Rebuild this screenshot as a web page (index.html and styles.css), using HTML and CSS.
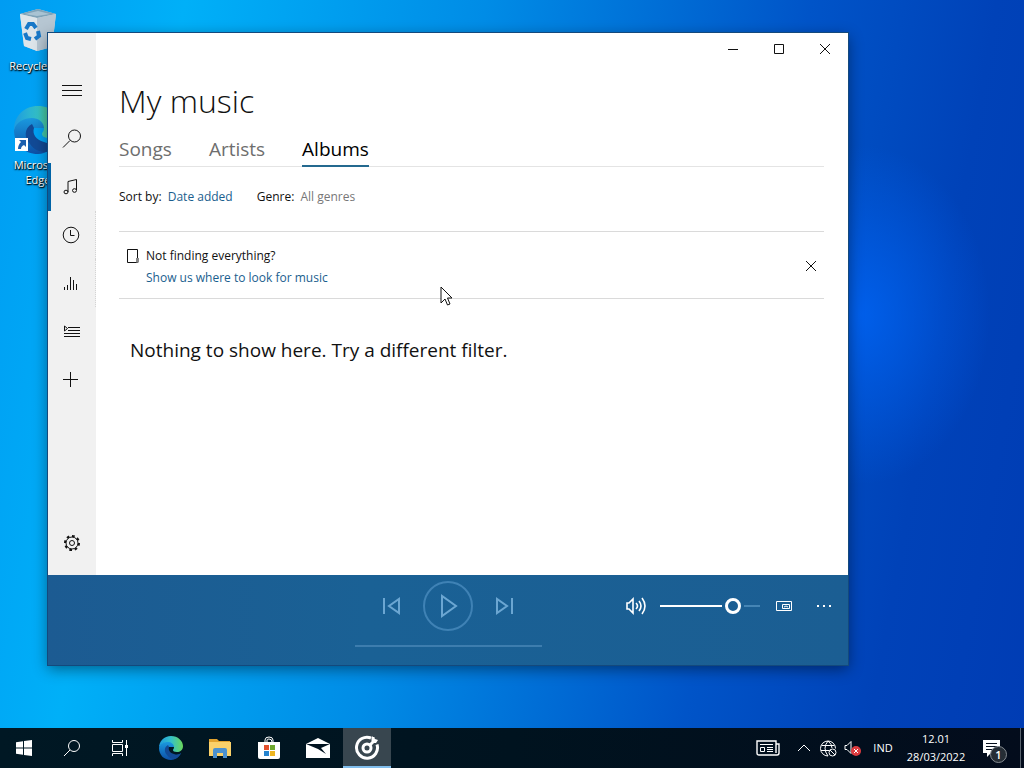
FILE: index.html
```html
<!DOCTYPE html>
<html lang="en">
<head>
  <meta charset="UTF-8" />
  <title>My music</title>
  <link rel="stylesheet" href="styles.css">
</head>
<body>

<svg class="defs" aria-hidden="true">
  <defs>
    <linearGradient id="edge-low" x1="0" y1="0" x2="0" y2="1">
      <stop offset="0" stop-color="#1b9de2"/>
      <stop offset="1" stop-color="#0d4fa6"/>
    </linearGradient>
    <linearGradient id="edge-top" x1="0" y1="0" x2="1" y2="0">
      <stop offset="0" stop-color="#1d9be0"/>
      <stop offset="0.5" stop-color="#34c1c8"/>
      <stop offset="1" stop-color="#6bd85a"/>
    </linearGradient>
    <symbol id="edge" viewBox="0 0 24 24">
      <path fill="url(#edge-low)" d="M0 12C1 7 5 5 10 5c5 0 8 3 8 6H9c-1 4 2 8 7 8 3 0 5-1 6-2-2 4-6 7-10 7C5 24 0 19 0 12z"/>
      <path fill="#124a96" d="M9 9c-4 2-4 7-1 10 2 3 5 4 8 4 3-1 5-4 6-6-2 2-5 2-7 1-4-1-6-4-5-7z"/>
      <path fill="url(#edge-top)" d="M0 12C0 5 5 0 12 0c7 0 12 5 12 10 0 4-3 6-6 6s-4-1-4-2 1-1 1-3c0-3-3-5-6-5-4 0-8 2-9 6z"/>
    </symbol>
  </defs>
</svg>

<main class="desktop">
  <div class="shortcuts">
    <a class="shortcut" href="#">
      <svg width="42" height="44" viewBox="0 0 42 44">
        <path fill="#c9d6df" d="M3 6l18-5 18 5-4 33-15 4-13-5z"/>
        <path fill="#7fa3b8" d="M3 6l18-5 18 5-19 4z"/>
        <path fill="#a9c3d3" d="M8 6l13-3 12 3-13 2z"/>
        <path fill="#dde5ea" d="M3 6l17 4v33L7 38z"/>
        <path fill="#b6c6d2" d="M20 10l19-4-4 33-15 4z"/>
        <g fill="none" stroke="#1878c8" stroke-width="4">
          <path d="M9 21l3-5h4l3 4M21 23l1 5-4 3M14 31l-4-1-2-5"/>
        </g>
      </svg>
      <span>Recycle Bin</span>
    </a>
    <a class="shortcut" href="#">
      <span class="edge-icon">
        <svg width="48" height="48"><use href="#edge"/></svg>
        <svg class="arrow" width="13" height="13" viewBox="0 0 13 13">
          <path fill="#fff" d="M0 0h13v13H0z"/>
          <path fill="#1c5fae" d="M4 2h7v7L9 7c-2 1-3 2-3 4H3c0-3 1-5 3-7z"/>
        </svg>
      </span>
      <span>Microsoft Edge</span>
    </a>
  </div>

  <section class="window">
    <nav class="sidebar">
      <button aria-label="Menu"><svg viewBox="0 0 20 20"><path d="M0 4.500h20M0 9.500h20M0 14.500h20"/></svg></button>
      <button aria-label="Search"><svg viewBox="0 0 20 20"><circle cx="12.500" cy="7" r="6"/><path d="M8 11.500L1 18.500"/></svg></button>
      <button class="selected" aria-label="My music"><svg viewBox="0 0 20 20"><path d="M6 15V4.500L14.500 2.500V13"/><ellipse cx="4" cy="15" rx="2" ry="1.800"/><ellipse cx="12.500" cy="13.500" rx="2" ry="1.800"/></svg></button>
      <button class="clipped" aria-label="Recent plays"><svg viewBox="0 0 20 20"><circle cx="9" cy="10" r="7.800"/><path d="M8.500 5v5.500h4"/></svg></button>
      <button class="clipped" aria-label="Now playing"><svg viewBox="0 0 20 20"><path d="M2.500 14v3M5.500 12v5M8.500 4v13M11.500 7v10M14.500 11v6"/></svg></button>
      <button aria-label="Playlists"><svg viewBox="0 0 20 20"><path d="M6 6.500h12M6 9.500h12M2 12.500h16M2 15.500h16M2.500 5v5l3-2.500z"/></svg></button>
      <button aria-label="New playlist"><svg viewBox="0 0 20 20"><path d="M8.500 3v15M1 10.500h15"/></svg></button>
      <button class="settings" aria-label="Settings">
        <svg viewBox="0 0 20 20">
          <circle cx="10" cy="10" r="6"/>
          <circle class="teeth" cx="10" cy="10" r="7" pathLength="32"/>
          <circle cx="10" cy="10" r="2.500"/>
        </svg>
      </button>
    </nav>

    <div class="page">
      <div class="titlebar">
        <button aria-label="Minimize"><svg viewBox="0 0 10 10"><path d="M0 5.500h10"/></svg></button>
        <button aria-label="Maximize"><svg viewBox="0 0 10 10"><path d="M.5.5h9v9h-9z"/></svg></button>
        <button aria-label="Close"><svg viewBox="0 0 10 10"><path d="M0 0l10 10M10 0L0 10"/></svg></button>
      </div>

      <div class="content">
        <h1>My music</h1>

        <div class="tabs">
          <button class="tab">Songs</button>
          <button class="tab">Artists</button>
          <button class="tab active">Albums</button>
        </div>

        <div class="filters">
          <div>Sort by: <a href="#">Date added</a></div>
          <div>Genre: <a class="muted" href="#">All genres</a></div>
        </div>

        <div class="notice">
          <svg width="14" height="16" viewBox="0 0 14 16"><path d="M1.500 1.500h10v13h-10z"/><path class="tag" d="M11.500 10v4.500"/></svg>
          <div class="notice-text">
            <p>Not finding everything?</p>
            <a href="#">Show us where to look for music</a>
          </div>
          <button aria-label="Dismiss"><svg viewBox="0 0 10 10"><path d="M0 0l10 10M10 0L0 10"/></svg></button>
        </div>

        <p class="empty">Nothing to show here. Try a different filter.</p>
      </div>
    </div>

    <footer class="player">
      <div class="transport">
        <button aria-label="Previous"><svg width="20" height="20" viewBox="0 0 20 20"><path d="M2 2v16M17 3v14L7 10z"/></svg></button>
        <button class="play" aria-label="Play"><svg width="24" height="24" viewBox="0 0 24 24"><path d="M6 2v20l14-10z"/></svg></button>
        <button aria-label="Next"><svg width="20" height="20" viewBox="0 0 20 20"><path d="M18 2v16M3 3v14l10-7z"/></svg></button>
      </div>
      <div class="extras">
        <button class="speaker" aria-label="Mute"><svg width="22" height="20" viewBox="0 0 22 20"><path stroke-width="1.600" d="M2 7h2l4-4v14l-4-4H2zM11 7q3 3 0 6M14 5q4 5 0 10M17 2q6 8 0 16"/></svg></button>
        <input class="volume" type="range" min="0" max="100" value="77" aria-label="Volume">
        <button aria-label="Mini view"><svg width="16" height="12" viewBox="0 0 16 12"><path d="M.5 1.500h15v9H.5zM6.500 4.500h7v4h-7zM8 7l2-1 2 1"/></svg></button>
        <button aria-label="More"><svg width="16" height="4" viewBox="0 0 16 4"><path class="dots" d="M1 1h2v2H1zM7 1h2v2H7zM13 1h2v2h-2z"/></svg></button>
      </div>
      <input class="progress" type="range" value="0" disabled aria-label="Progress">
    </footer>
  </section>

  <svg class="cursor" width="13" height="20" viewBox="0 0 13 20"><path d="M1 1v16l4-4 2.500 6 2.500-1-2.500-6H12z"/></svg>
</main>

<footer class="taskbar">
  <div class="system">
    <button aria-label="Start"><svg width="16" height="16" viewBox="0 0 16 16"><path class="solid" d="M0 2.300l7-1V7.500H0zM8 1.100L16 0v7.500H8zM0 8.500h7v6.200l-7-1zM8 8.500h8V16l-8-1.100z"/></svg></button>
    <button aria-label="Search"><svg width="18" height="18" viewBox="0 0 18 18"><circle cx="11" cy="7" r="5.500"/><path d="M7 11L1 17"/></svg></button>
    <button aria-label="Task view"><svg width="16" height="16" viewBox="0 0 16 16"><path d="M.5 0v2.500h10V0M.5 4.500h10v7H.5zM.5 16v-2.500h10V16M14.500 0v16"/><path class="solid" d="M13 5h3v3h-3z"/></svg></button>
  </div>
  <div class="apps">
    <button aria-label="Edge"><svg class="color" width="24" height="24"><use href="#edge"/></svg></button>
    <button aria-label="File Explorer">
      <svg class="color" width="22" height="20" viewBox="0 0 22 20">
        <path fill="#e2a32e" d="M0 1h8l2 2h11v5H0z"/>
        <path fill="#fad16a" d="M0 4h22v14H0z"/>
        <path fill="#4b91cf" d="M4 12q0-2 2-2h10q2 0 2 2v8h-4v-5H8v5H4z"/>
      </svg>
    </button>
    <button aria-label="Store">
      <svg width="24" height="24" viewBox="0 0 24 24">
        <path d="M8 6V4q0-3 4-3t4 3v2M10 6V4q0-1 2-1 3 0 3 3"/>
        <path class="solid" d="M1 6h22v15q0 2-2 2H3q-2 0-2-2z"/>
        <g stroke="none">
          <path fill="#e2502d" d="M7 9h5v5H7z"/><path fill="#6fa82e" d="M13 9h5v5h-5z"/>
          <path fill="#2584cf" d="M7 15h5v5H7z"/><path fill="#eeb621" d="M13 15h5v5h-5z"/>
        </g>
      </svg>
    </button>
    <button aria-label="Mail">
      <svg width="24" height="20" viewBox="0 0 24 20">
        <path class="solid" d="M0 6l12-6 12 6v14H0z"/>
        <path stroke="none" fill="#00121f" d="M0 6h24l-9 4 5 6-8-5z"/>
      </svg>
    </button>
    <button class="running" aria-label="Groove Music">
      <svg width="26" height="26" viewBox="0 0 26 26">
        <path class="ring" d="M17 3A10.500 10.500 0 1 0 23 9.500"/>
        <circle class="ring" cx="13" cy="13" r="4"/>
        <path class="ring" d="M16 10l3-3V2"/>
        <path class="solid" d="M18 1l3 3 3 1-2 3h-4z"/>
      </svg>
    </button>
  </div>
  <div class="tray">
    <button class="news" aria-label="News"><svg width="24" height="16" viewBox="0 0 24 16"><path stroke-width="1.400" d="M20 4h3v9q0 2-2 2H3q-2 0-2-2V1h19v12"/><path d="M4 4.500h13M11 7.500h6M11 9.500h6M11 11.500h6M4.500 7.500h4v4h-4z"/></svg></button>
    <button class="chevron" aria-label="Show hidden icons"><svg width="12" height="8" viewBox="0 0 12 8"><path d="M0 7l6-6 6 6"/></svg></button>
    <button class="small" aria-label="Network"><svg width="17" height="17" viewBox="0 0 17 17"><path d="M8 16a7.500 7.500 0 1 1 7.500-7.500M8 16Q2 8 8 1q4 3 4 7M1.500 5.500h13M1 10.500h8"/><circle cx="12.500" cy="12.500" r="3.500"/><path d="M10 10l5 5"/></svg></button>
    <button class="small" aria-label="Volume"><svg width="17" height="16" viewBox="0 0 17 16"><path d="M1 5.500h2l4-4v12l-4-4H1z"/><circle fill="#dc3b3f" stroke="none" cx="12" cy="11" r="5"/><path d="M10 9l4 4M14 9l-4 4"/></svg></button>
    <button class="lang">IND</button>
    <button class="clock"><span>12.01</span><span>28/03/2022</span></button>
    <button class="alerts" aria-label="Notifications"><svg width="17" height="17" viewBox="0 0 17 17"><path class="solid" d="M0 0h17v13H8l-4 4v-4H0z"/><path class="lines" d="M3 3.500h11M3 6.500h11M3 9.500h7"/></svg><span class="badge">1</span></button>
  </div>
</footer>

</body>
</html>
```

FILE: styles.css
```css
* {
  box-sizing: border-box;
}
body {
  margin: 0;
  height: 100vh;
  display: flex;
  flex-direction: column;
  overflow: hidden;
  font-family: 'Open Sans', 'Noto Sans', sans-serif;
  font-size: 12px;
  line-height: 16px;
  color: #111;
  background:
    radial-gradient(ellipse 130px 170px at 84% 41%, rgba(0, 100, 245, 0.8), transparent),
    linear-gradient(100deg, #009cf2 0%, #00b0f8 16%, #008ce6 42%, #0054c8 70%, #0042b8 86%, #003cb4 100%);
}
button {
  display: flex;
  align-items: center;
  justify-content: center;
  padding: 0;
  border: 0;
  background: none;
  color: inherit;
  font: inherit;
}
button svg {
  fill: none;
  stroke: currentColor;
}
a {
  color: #1a5e8e;
  text-decoration: none;
}
p {
  margin: 0;
}
.defs {
  position: absolute;
  width: 0;
  height: 0;
}

/* Desktop */
.desktop {
  position: relative;
  flex: 1;
}
.shortcuts {
  display: flex;
  flex-direction: column;
  gap: 33px;
  width: 76px;
  padding-top: 8px;
}
.shortcut {
  display: flex;
  flex-direction: column;
  align-items: center;
  gap: 6px;
  color: #fff;
  font-size: 11px;
  line-height: 15px;
  text-align: center;
  text-shadow: 0 1px 2px #000, 1px 1px 1px #000;
}
.edge-icon {
  position: relative;
  height: 45px;
}
.arrow {
  position: absolute;
  left: 1px;
  bottom: 0;
}

/* Window */
.window {
  position: absolute;
  top: 33px;
  left: 48px;
  right: 176px;
  bottom: 63px;
  display: grid;
  grid-template-columns: 48px 1fr;
  grid-template-rows: 1fr 90px;
  background: #fff;
  box-shadow: 0 0 0 1px #14497c, 0 4px 14px rgba(0, 0, 0, 0.45);
}
.sidebar {
  display: flex;
  flex-direction: column;
  padding: 34px 0 8px;
  background: #f1f1f1;
}
.sidebar button {
  height: 48px;
}
.sidebar svg {
  width: 20px;
  height: 20px;
}
.sidebar .selected {
  border-left: 3px solid #0063a6;
  padding-right: 3px;
}
.sidebar .clipped {
  border-right: 1px dotted #d4d4d4;
  padding-left: 1px;
}
.sidebar .settings {
  margin-top: auto;
}
.teeth {
  stroke-width: 2;
  stroke-dasharray: 2 2;
}
.titlebar {
  display: flex;
  justify-content: flex-end;
}
.titlebar button {
  width: 46px;
  height: 32px;
}
.titlebar svg,
.notice button svg {
  width: 10px;
  height: 10px;
  overflow: visible;
}

/* Library page */
.content {
  padding: 12px 24px 12px 23px;
}
h1 {
  margin: 0;
  font-size: 32px;
  line-height: 48px;
  font-weight: 300;
}
.tabs {
  display: flex;
  gap: 37px;
  margin-top: 8px;
  border-bottom: 1px solid #e4e4e4;
}
.tab {
  height: 34px;
  margin-bottom: -1px;
  border-bottom: 2px solid transparent;
  font-size: 19px;
  color: #6e6e6e;
}
.tab.active {
  color: #000;
  border-color: #24698f;
}
.filters {
  display: flex;
  gap: 24px;
  padding: 22px 0 26px;
}
.filters a {
  margin-left: 3px;
}
.filters .muted {
  color: #777;
}
.notice {
  display: flex;
  gap: 6px;
  padding: 16px 0 12px 7px;
  border-top: 1px solid #dadada;
  border-bottom: 1px solid #dadada;
}
.notice > svg {
  fill: none;
  stroke: #111;
}
.notice .tag {
  stroke: #888;
  stroke-width: 3;
}
.notice-text {
  flex: 1;
}
.notice-text p {
  margin-bottom: 6px;
}
.notice button {
  width: 26px;
  height: 36px;
}
.empty {
  padding: 36px 11px;
  font-size: 19px;
  line-height: 30px;
}

/* Player */
.player {
  grid-column: 1 / -1;
  display: grid;
  grid-template-columns: 1fr auto 1fr;
  grid-template-rows: 62px 18px;
  align-items: center;
  background: linear-gradient(90deg, #1c5b92, #1a6195 40%, #1b5e93);
  color: #fff;
}
.transport {
  grid-column: 2;
  display: flex;
  align-items: center;
  gap: 11px;
  color: #6ba6d2;
}
.transport button {
  width: 40px;
  height: 50px;
}
.transport svg {
  stroke-width: 2;
}
.transport .play {
  width: 50px;
  border: 2px solid #3f82b5;
  border-radius: 50%;
}
.extras {
  display: flex;
  align-items: center;
  justify-content: flex-end;
  padding-right: 4px;
}
.extras button {
  width: 40px;
  height: 40px;
}
.extras .speaker {
  width: 48px;
}
.dots {
  fill: #fff;
  stroke: none;
}
.volume,
.progress {
  appearance: none;
  margin: 0;
  background: none;
}
.volume {
  width: 100px;
  margin-right: 4px;
}
.volume::-webkit-slider-runnable-track {
  height: 2px;
  background: linear-gradient(90deg, #fff 62%, transparent 62%, transparent 84%, #4585b5 84%);
}
.volume::-webkit-slider-thumb {
  appearance: none;
  width: 16px;
  height: 16px;
  margin-top: -7px;
  border: 3px solid #fff;
  border-radius: 50%;
}
.progress {
  grid-column: 1 / -1;
  justify-self: center;
  width: 187px;
}
.progress::-webkit-slider-runnable-track {
  height: 2px;
  background: #3d7dae;
}
.progress::-webkit-slider-thumb {
  appearance: none;
  width: 0;
}
.cursor {
  position: absolute;
  top: 286px;
  left: 440px;
  fill: #fff;
  stroke: #111;
}

/* Taskbar */
.taskbar {
  display: flex;
  height: 40px;
  background: linear-gradient(90deg, #001824, #00131f 50%, #030c1c);
  color: #fff;
}
.taskbar .solid {
  fill: #fff;
  stroke: none;
}
.taskbar .color {
  stroke: none;
}
.system,
.apps,
.tray {
  display: flex;
}
.system button,
.apps button {
  width: 48px;
}
.apps {
  gap: 1px;
  margin-left: 3px;
}
.apps .running {
  padding-top: 2px;
  background: #38464f;
  border-bottom: 2px solid #80bdec;
}
.ring {
  stroke-width: 3;
}
.tray {
  margin-left: auto;
  border-right: 1px solid #59636e;
  margin-right: 3px;
  font-size: 11px;
}
.news {
  width: 48px;
}
.chevron,
.small {
  width: 24px;
}
.lang {
  width: 38px;
}
.tray .clock {
  flex-direction: column;
  gap: 2px;
  width: 68px;
}
.alerts {
  position: relative;
  width: 50px;
  padding-right: 8px;
}
.badge {
  position: absolute;
  left: 20px;
  top: 18px;
  width: 17px;
  height: 17px;
  border: 1px solid #858b91;
  border-radius: 50%;
  background: #252d35;
  font-weight: 600;
  line-height: 15px;
}
.alerts .lines {
  stroke: #07101d;
}
```
